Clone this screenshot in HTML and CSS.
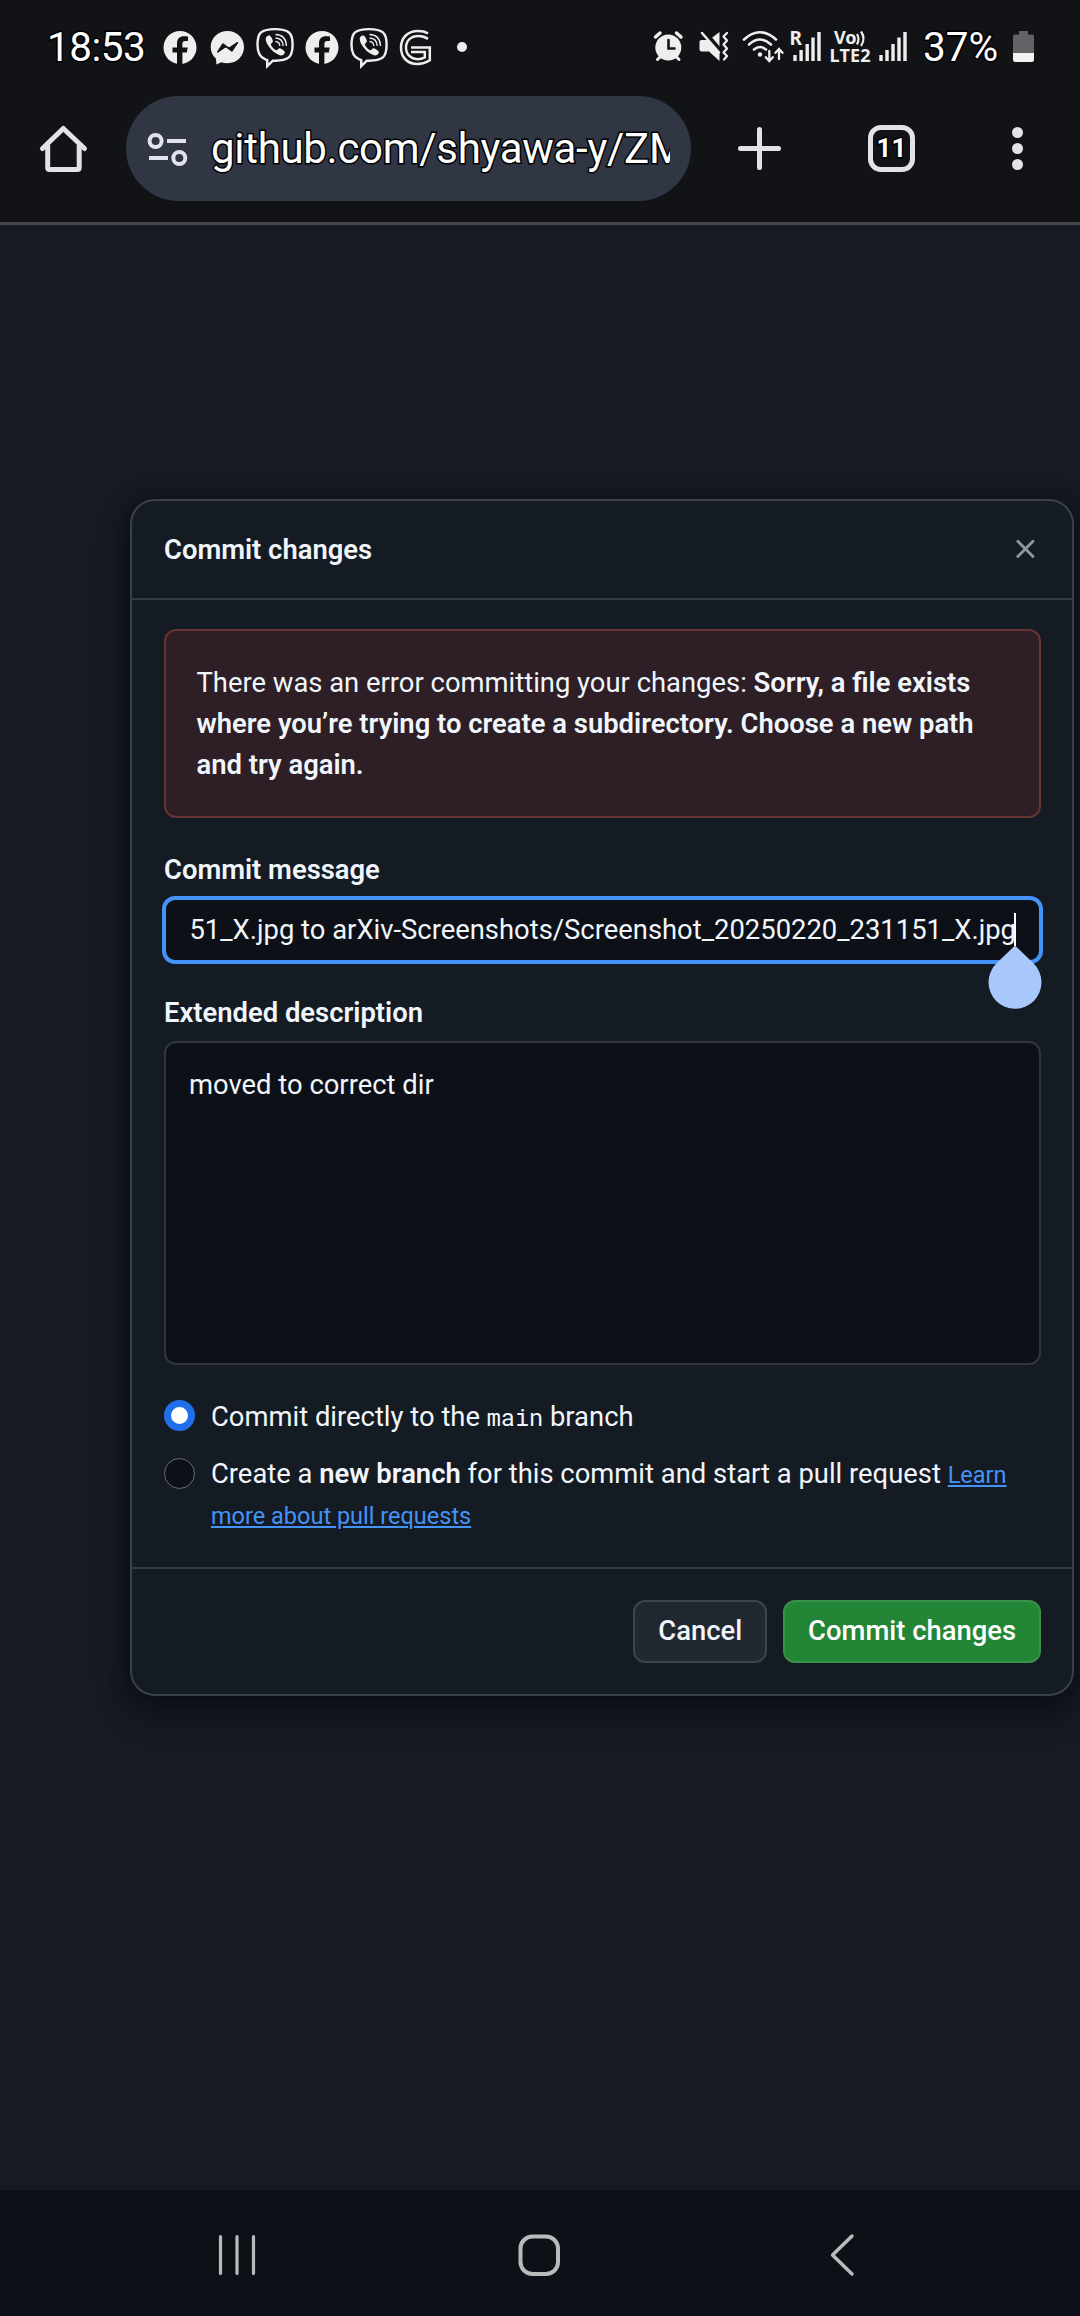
FILE: index.html
```html
<!DOCTYPE html>
<html lang="en">
<head>
<meta charset="utf-8">
<title>Commit changes</title>
<link rel="stylesheet" href="styles.css">
</head>
<body>
<svg class="defs" width="0" height="0">
  <symbol id="facebook" viewBox="0 0 44 56">
    <circle cx="22" cy="27.5" r="16.5" fill="#eee"/>
    <path d="M19 44.5V32.5h-4.500v-5h4.500v-4c0-5 2.800-7.300 7-7.300 1.700 0 3.200.2 4 .4v4.300h-2.600c-2.300 0-3 1.200-3 3v3.600h5.300l-.9 5h-4.400v12z" fill="#121316"/>
  </symbol>
  <symbol id="viber" viewBox="0 0 44 56">
    <path transform="translate(-1.6 -.6) scale(1.070 1.020)" d="M22 9.500c-5.500 0-10 .6-13 3.200-3 2.700-3.300 6.800-3.300 12 0 6.600 1.100 12.300 7.300 14.500l1.800.6v6l5.200-5.300h2c5.500 0 10-.6 13-3.200 3-2.700 3.500-7 3.500-12.600s-.5-9.300-3.500-12-7.500-3.200-13-3.200z" fill="none" stroke="#eee" stroke-width="2.300"/>
    <path d="M16.500 15.500c-1.500-.5-3.700 1-3.800 3.300 0 6 8.300 15.300 15 16.700 2 .3 4-1.600 4.200-3.200.2-1.200-4.300-4.200-5.600-4-1.200.2-1.700 2-2.800 1.900-2.100-.4-5.300-3.700-5.600-5.700-.1-1.100 1.800-1.600 2-2.900.2-1.500-1.900-5.600-3.400-6.100z" fill="#eee"/>
    <path d="M22.500 21.500c2.600.2 4.200 1.800 4.300 4.500M22.500 18c4.800.2 7.500 3 7.700 8M22.500 14.500c7 .2 10.700 4.300 11 11.500" fill="none" stroke="#eee" stroke-width="1.300"/>
  </symbol>
</svg>

<header class="status">
  <span class="clock outlined">18:53</span>
  <svg width="44" height="56"><use href="#facebook"/></svg>
  <svg class="messenger" width="47" height="56" viewBox="204 20 47 56"><path d="M227.500 31c-9.600 0-16.800 7-16.800 16 0 4.600 1.900 8.800 5.300 11.800l.4 5.600 4.800-2.200c2 .6 4.100 1 6.300 1 9.600 0 16.500-7.200 16.500-16.200s-7-16-16.500-16z" fill="#eee"/><path d="M217.800 52l5.200-8 6 4.400 8.500-5.700-5.700 8.300-6-4.500z" fill="#121316" stroke="#121316" stroke-width="1.500" stroke-linejoin="round"/></svg>
  <svg class="viber-first" width="44" height="56"><use href="#viber"/></svg>
  <svg class="fb-second" width="44" height="56"><use href="#facebook"/></svg>
  <svg class="viber-second" width="44" height="56"><use href="#viber"/></svg>
  <svg width="46" height="56" viewBox="391 20 46 56" fill="none" stroke="#eee" stroke-width="2.500"><path d="M428 33.300q-4-2.300-10-2.300c-10 0-17 6.500-17 16.500s6.500 16.500 16.500 16.500c5 0 8.500-1.400 12.300-3.800V47.500H411"/><path d="M428 39q-4-3-9.500-3c-7.500 0-12.500 4.500-12.500 11.500s5 11.700 11.500 11.700c3.500 0 5-.6 7.300-1.800V52H411"/></svg>
  <svg class="dot" width="40" height="56" viewBox="442 20 40 56"><circle cx="462" cy="47" r="5" fill="#eee"/></svg>
  <span class="grow"></span>
  <svg width="44" height="56" viewBox="646 20 44 56" stroke="#eee" stroke-linecap="round"><circle cx="668.300" cy="47.500" r="13" fill="#eee" stroke="none"/><path d="M655.500 37l4.500-4M681 37l-4.500-4" stroke-width="3.500"/><path d="M657.500 59.500l3-3M679 59.500l-3-3" stroke-width="3"/><path d="M668.500 40v8.500h6" fill="none" stroke="#121316" stroke-width="2.600"/></svg>
  <svg width="46" height="56" viewBox="690 20 46 56"><path d="M699.500 41.500q0-1.500 2-1.500h7.500l10.500-8v29l-10.500-9.500h-7.500q-2 0-2-2z" fill="#eee"/><path d="M703.500 31l18 21" stroke="#121316" stroke-width="4.500"/><path d="M702 33l17 19.500" stroke="#eee" stroke-width="2.500" stroke-linecap="round"/><path d="M727 33l-3.500 3.500 3.500 4-3.500 4 3.500 4-3.500 4 3.500 3.500-3 3.500" fill="none" stroke="#eee" stroke-width="2.300" stroke-linecap="round" stroke-linejoin="round"/></svg>
  <svg width="51" height="56" viewBox="736 20 51 56" fill="none" stroke="#eee" stroke-width="2.600" stroke-linecap="round"><path d="M744 39.500q15.500-14.500 32 0M749 44.500q11-10 22 0M754 49.500q6-5 12 0"/><circle cx="760" cy="54.500" r="2.200" fill="#eee" stroke="none"/><path d="M769.300 51v10m-3.500-3.800 3.500 3.800 3.500-3.800M779 59V49m-3.500 3.800 3.500-3.800 3.500 3.800" stroke-width="2.300"/></svg>
  <svg width="38" height="56" viewBox="787 20 38 56" fill="#eee"><text class="rat" x="789.500" y="44.500" font-size="19">R</text><path d="M793.300 55h3.400v6h-3.400zM799.400 50h3.400v11h-3.400zM805.500 44h3.400v17h-3.400zM811.300 37.500h3.400V61h-3.400zM817.300 32h3.400v29h-3.400z"/></svg>
  <svg width="49" height="56" viewBox="825 20 49 56" fill="#eee"><text class="rat" x="834" y="44" font-size="18">Vo</text><text class="rat" x="829.500" y="61.500" font-size="18" textLength="41">LTE2</text><path d="M857 34q3 5 0 10.500M861 31.500q5 7 0 14.500" fill="none" stroke="#eee" stroke-width="2.200"/></svg>
  <svg width="40" height="56" viewBox="874 20 40 56" fill="#eee"><path d="M879.300 55h3.400v6h-3.400zM885.300 50h3.400v11h-3.400zM891.300 44h3.400v17h-3.400zM897.300 37.500h3.400V61h-3.400zM903.300 32h3.400v29h-3.400z"/></svg>
  <span class="percent outlined">37%</span>
  <svg width="72" height="56" viewBox="1008 20 72 56"><path d="M1019 31h9v3.500h4q2 0 2 2V53h-21V36.500q0-2 2-2h4z" fill="#626365"/><path d="M1013 53h21v6.500q0 2.500-2.500 2.500h-16q-2.500 0-2.500-2.500z" fill="#f2f2f2"/></svg>
</header>

<nav class="toolbar">
  <svg width="126" height="105" viewBox="0 96 126 105" fill="none" stroke="#e3e1e9" stroke-width="5" stroke-linejoin="round" stroke-linecap="round"><path d="M42.500 148.500L63.300 128.500 84.500 148.500"/><path d="M47.700 146v21.500q0 2 2 2h27.500q2 0 2-2V146" /></svg>
  <div class="omnibox">
    <svg width="44" height="40" viewBox="144 128 44 40" fill="none" stroke="#e3e1e9" stroke-width="4"><circle cx="155.600" cy="140" r="6"/><circle cx="179.300" cy="157" r="6"/><path d="M167 140h19M149 157h19"/></svg>
    <div class="url outlined">github.com/shyawa-y/ZM</div>
  </div>
  <svg width="136" height="105" viewBox="691 96 136 105" stroke="#e3e1e9" stroke-width="5" stroke-linecap="round"><path d="M759.500 129.500v38M740.500 148.500h38"/></svg>
  <div class="tabs outlined">11</div>
  <svg width="145" height="105" viewBox="935 96 145 105" fill="#e3e1e9"><circle cx="1017.500" cy="132.500" r="5.500"/><circle cx="1017.500" cy="148.500" r="5.500"/><circle cx="1017.500" cy="164.500" r="5.500"/></svg>
</nav>

<main class="page">
  <section class="dialog">
    <div class="dialog-head">
      <h1 class="strong">Commit changes</h1>
      <svg width="34" height="34" viewBox="1008 532 34 34" stroke="#9198a1" stroke-width="2.800" stroke-linecap="round"><path d="M1017.800 541.200l15.200 15.200M1033 541.200l-15.200 15.200"/></svg>
    </div>
    <div class="dialog-body">
      <p class="flash">There was an error committing your changes: <b>Sorry, a file exists where you’re trying to create a subdirectory. Choose a new path and try again.</b></p>
      <div class="label message-label strong">Commit message</div>
      <div class="input"><span class="value">51_X.jpg to arXiv-Screenshots/Screenshot_20250220_231151_X.jpg</span>
        <i class="caret"></i>
        <svg class="handle" width="54" height="64" viewBox="0 0 54 64"><path d="M27 .5L45.500 18.300A26.500 26.500 0 1 1 8.500 18.300Z" fill="#a8c7fa"/></svg>
      </div>
      <div class="label desc-label strong">Extended description</div>
      <div class="textarea">moved to correct dir</div>
      <div class="choice"><span class="radio on"></span><span>Commit directly to the <code>main</code> branch</span></div>
      <div class="choice second"><span class="radio"></span><span>Create a <b>new branch</b> for this commit and start a pull request <a>Learn more about pull requests</a></span></div>
    </div>
    <div class="dialog-foot">
      <div class="btn">Cancel</div>
      <div class="btn primary">Commit changes</div>
    </div>
  </section>
</main>

<footer class="navbar">
  <svg width="60" height="60" viewBox="207 2225 60 60" stroke="#b9babc" stroke-width="3.200" stroke-linecap="round"><path d="M220.500 2236.500v37M237 2236.500v37M253.500 2236.500v37"/></svg>
  <svg width="60" height="60" viewBox="509 2225 60 60" fill="none" stroke="#b9babc" stroke-width="4"><rect x="519.500" y="2236.500" width="37.500" height="37.500" rx="12"/></svg>
  <svg width="60" height="60" viewBox="812 2225 60 60" fill="none" stroke="#b9babc" stroke-width="3.500" stroke-linecap="round" stroke-linejoin="round"><path d="M852 2236l-19.500 19 19.500 19"/></svg>
</footer>
</body>
</html>
```
FILE: styles.css
```css
* { box-sizing: border-box; }
body {
  margin: 0;
  width: 1080px;
  height: 2316px;
  overflow: hidden;
  display: flex;
  flex-direction: column;
  background: #121316;
  color: #f0f6fc;
  font: 27.4px/41px Roboto, sans-serif;
}
svg { display: block; flex: none; }
.defs { position: absolute; }
.grow { flex: 1; }
.outlined {
  color: #fff;
  -webkit-text-stroke: 3px #000;
  paint-order: stroke fill;
  white-space: nowrap;
}

.status { display: flex; height: 96px; padding-top: 20px; flex: none; }
.clock { flex: none; width: 158px; padding-left: 47px; font-size: 40.5px; line-height: 54px; letter-spacing: -.5px; }
.messenger { margin-left: 2px; }
.viber-first { margin-left: 1.5px; }
.fb-second { margin-left: 3px; }
.viber-second { margin-left: 3px; margin-right: .5px; }
.dot { margin-left: 5px; }
.percent { flex: none; width: 94px; padding-left: 9px; font-size: 40.5px; line-height: 54px; }
.rat { font-family: "Noto Sans", sans-serif; font-weight: 700; }

.toolbar { display: flex; height: 129px; flex: none; border-bottom: 3px solid #47484d; }
.omnibox {
  flex: none;
  width: 565px;
  height: 105px;
  padding-left: 18px;
  display: flex;
  align-items: center;
  border-radius: 53px;
  background: #313644;
}
.url { width: 460px; margin-left: 22px; padding-left: 1px; overflow: hidden; font-size: 42px; line-height: 60px; letter-spacing: -.3px; }
.tabs {
  flex: none;
  width: 47px;
  height: 47px;
  margin: 29px 20px 0 41px;
  border: 5px solid #e3e1e9;
  border-radius: 13px;
  font-weight: 700;
  font-size: 26px;
  line-height: 37px;
  text-align: center;
}

.page { flex: 1; padding: 274px 0 0 130px; background: #161a21; overflow: hidden; }
.dialog {
  width: 944px;
  height: 1197px;
  border: 2px solid #3a4049;
  border-radius: 25px;
  background: #151b23;
  box-shadow: 0 16px 32px rgba(1, 4, 9, .42), 0 0 22px rgba(1, 4, 9, .35);
}
.strong, b { font-weight: 600; }
.dialog-head {
  display: flex;
  align-items: center;
  justify-content: space-between;
  height: 99px;
  padding: 0 30px 1px 32px;
  border-bottom: 2px solid #343b44;
}
h1 { margin: 0; padding-top: 3px; font-size: inherit; }
.dialog-body { padding: 29px 31px 32px 32px; }
.flash {
  margin: 0;
  height: 189px;
  padding: 32px 30.5px 30px;
  border: 2px solid #673334;
  border-radius: 12px;
  background: #2d1f25;
}
.message-label { margin: 32px 0 5px; }
.input {
  position: relative;
  display: flex;
  justify-content: flex-end;
  height: 68px;
  margin: 0 -2px;
  padding-right: 23px;
  border: 4px solid #4493f8;
  border-radius: 13px;
  background: #0d1117;
  line-height: 60px;
  white-space: nowrap;
}
.caret { position: absolute; right: 23px; top: 13px; width: 2px; height: 33px; background: #fff; }
.handle { position: absolute; right: -2.5px; top: 45px; }
.desc-label { margin: 29px 0 7px; }
.textarea {
  height: 324px;
  padding: 22px 23px;
  border: 2px solid #30363e;
  border-radius: 12px;
  background: #0d1117;
}
.choice { display: flex; gap: 16px; margin-top: 32px; }
.choice.second { margin-top: 16px; margin-bottom: -1px; }
.radio {
  flex: none;
  width: 31px;
  height: 31px;
  margin-top: 4px;
  border: 1.5px solid #656c76;
  border-radius: 50%;
  background: #0d1117;
}
.radio.on { margin-top: 3px; border: 7.500px solid #1f6feb; background: #fff; }
code { font: 23.500px/1 "Roboto Mono", "Liberation Mono", monospace; }
a { font-size: 23.500px; line-height: 1; color: #4493f8; text-decoration: underline; }
.dialog-foot {
  display: flex;
  justify-content: flex-end;
  gap: 16px;
  padding: 31px 31px 0;
  border-top: 2px solid #343b44;
}
.btn {
  height: 63px;
  padding: 0 23px;
  border: 2px solid #3d444d;
  border-radius: 12px;
  background: #212830;
  font-weight: 500;
  line-height: 59px;
}
.btn.primary { border-color: #3a9149; background: #238636; color: #fff; }

.navbar {
  height: 126px;
  flex: none;
  display: flex;
  gap: 242.500px;
  padding: 35px 0 0 207px;
  background: #0d1117;
}
```
